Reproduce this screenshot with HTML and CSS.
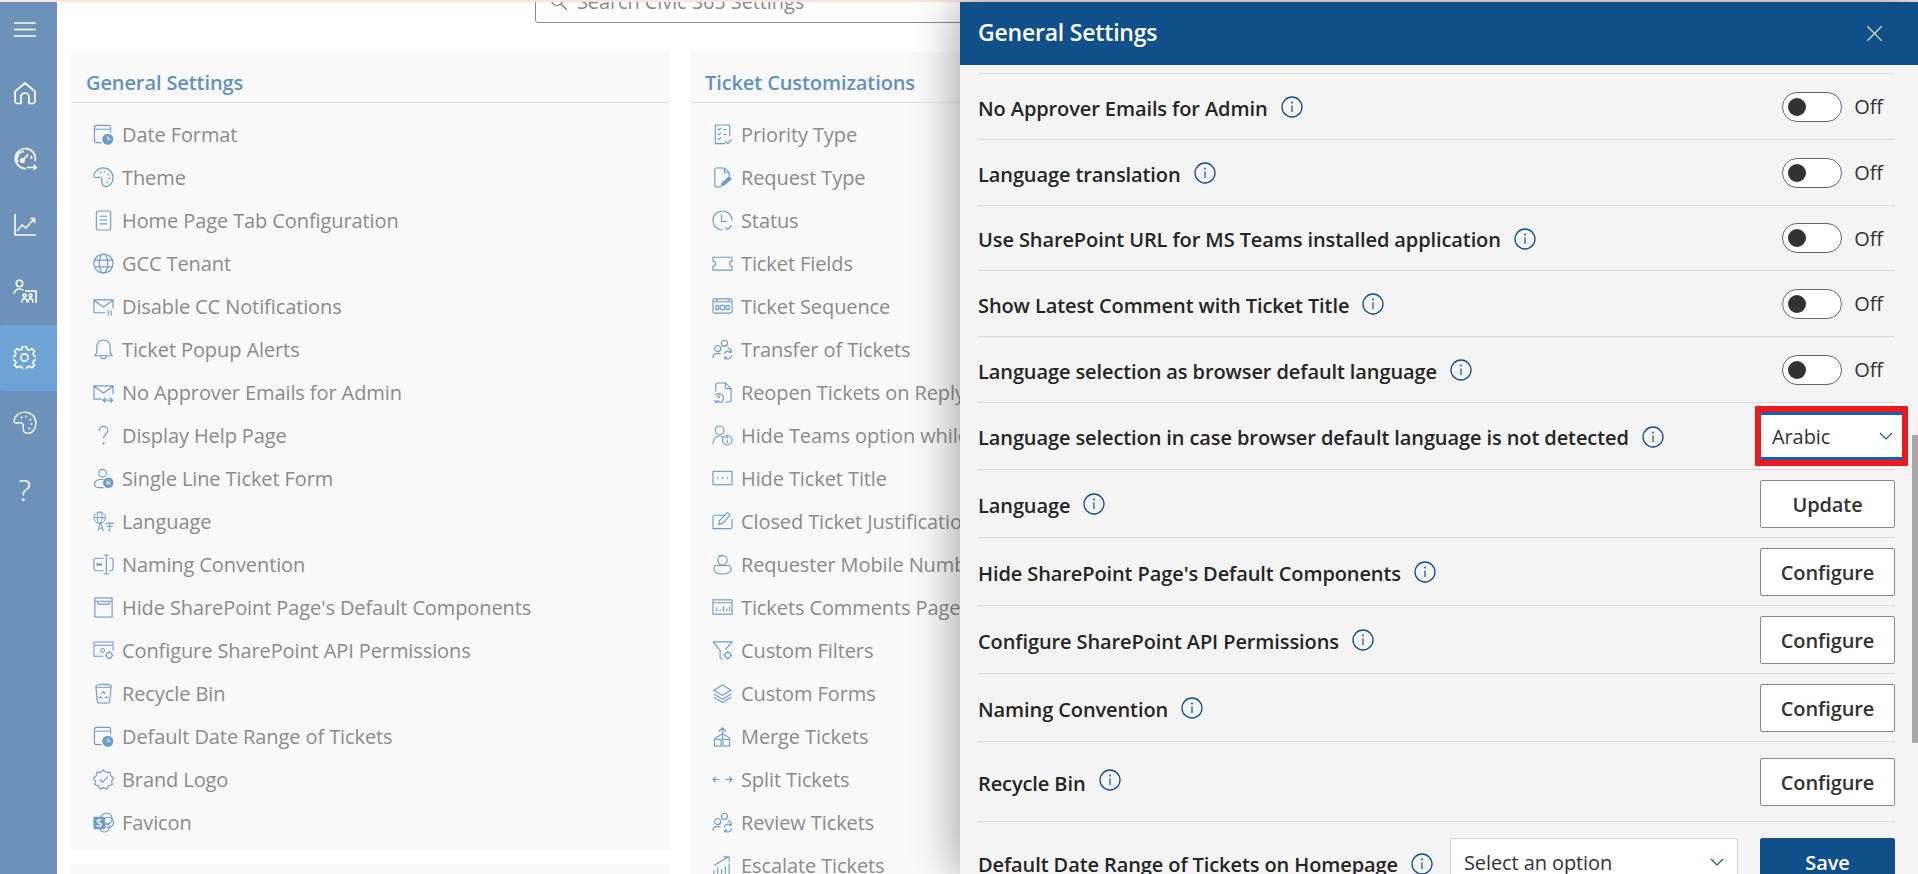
FILE: index.html
```html
<!DOCTYPE html>
<html lang="en">
<head>
  <meta charset="UTF-8">
  <title>Civic 365 Settings</title>
  <link rel="stylesheet" href="styles.css">
</head>
<body>
  <svg class="icon-defs" width="0" height="0">
    <symbol id="i-info" viewBox="0 0 22 22">
      <circle cx="11" cy="11" r="10" fill="none" stroke="currentColor" stroke-width="1.3"/>
      <path d="M11 9.500v6.500" fill="none" stroke="currentColor" stroke-width="1.2"/>
      <circle cx="11" cy="6.500" r=".9" fill="currentColor"/>
    </symbol>
    <symbol id="i-chevron" viewBox="0 0 14 8">
      <path d="M1 1l6 6 6-6" fill="none" stroke="currentColor" stroke-width="1.1"/>
    </symbol>
    <symbol id="i-calclock" viewBox="0 0 22 22">
      <path d="M9 19.500H3.500A2 2 0 0 1 1.500 17.500V3.500a2 2 0 0 1 2-2h13a2 2 0 0 1 2 2V9M1.500 5.500h17" fill="none" stroke="currentColor" stroke-width="1.2"/>
      <circle cx="15.500" cy="16" r="5.800" fill="currentColor"/>
      <path d="M15.500 12.800V16h3" fill="none" stroke="#f9f9f9" stroke-width="1.2"/>
    </symbol>
    <symbol id="i-palette" viewBox="0 0 22 22">
      <path d="M11 1C5.500 1 1.500 4.500 1 9c-.2 1.600 1.500 2.500 3 2 2-.7 4-.5 5 1 .9 1.500 0 3 .5 5 .4 2 2 3.500 4 3.500 4.500 0 7.500-4.500 7.500-9.500C21 5.500 16.500 1 11 1z" fill="none" stroke="currentColor" stroke-width="1.3"/>
      <circle cx="8" cy="6" r=".9" fill="currentColor"/><circle cx="12" cy="5" r=".9" fill="currentColor"/><circle cx="16" cy="8" r=".9" fill="currentColor"/><circle cx="17" cy="12" r=".9" fill="currentColor"/><circle cx="15" cy="16" r=".9" fill="currentColor"/>
    </symbol>
    <symbol id="i-gear" viewBox="0 0 24 24">
      <path d="M10 1.500h4l.7 3 2.300 1 2.600-1.700 2.800 2.800-1.600 2.600 1 2.300 2.700.7v3.600l-2.700.7-1 2.300 1.600 2.600-2.800 2.800-2.600-1.700-2.300 1-.7 2.500h-4l-.7-2.500-2.300-1-2.600 1.700-2.800-2.800 1.600-2.600-1-2.300-2.700-.7v-3.600l2.700-.7 1-2.300-1.600-2.600 2.800-2.800L7 5.500l2.300-1z" transform="translate(0 -1) scale(1 .98)" fill="none" stroke="currentColor" stroke-width="1.7"/>
      <circle cx="12" cy="12" r="3.800" fill="none" stroke="currentColor" stroke-width="1.7"/>
    </symbol>
    <symbol id="i-refresh-people" viewBox="0 0 22 22">
      <circle cx="13" cy="4.500" r="3.200" fill="none" stroke="currentColor" stroke-width="1.2"/>
      <circle cx="6" cy="10" r="3.200" fill="none" stroke="currentColor" stroke-width="1.2"/>
      <path d="M1 20c0-3 2-5 5-5 1.200 0 2 .3 3 1M16.500 9c2 .7 3.500 1.500 4 3.500M13 16a4 4 0 0 1 7-2M20.500 17a4 4 0 0 1-7 2.500M20 11.500V14h-2.500M13.500 21.500V19h2.500" fill="none" stroke="currentColor" stroke-width="1.2"/>
    </symbol>
  </svg>

  <div class="top-strip"></div>

  <div class="app">
    <nav class="sidebar">
      <a class="side-btn side-menu">
        <svg width="22" height="15" viewBox="0 0 22 15"><path d="M0 1h22M0 7.500h22M0 14h22" stroke="#fff" stroke-width="1.3"/></svg>
      </a>
      <a class="side-btn">
        <svg width="22" height="24" viewBox="0 0 22 24"><path d="M1 10.500 11 2l10 8.500V20a2.500 2.500 0 0 1-2.500 2.500H15V16a4 4 0 0 0-8 0v6.500H3.500A2.500 2.500 0 0 1 1 20z" fill="none" stroke="#fff" stroke-width="1.7" stroke-linejoin="round"/></svg>
      </a>
      <a class="side-btn">
        <svg width="24" height="24" viewBox="0 0 24 24" fill="none" stroke="#fff" stroke-width="1.7"><path d="M13 21.500a10 10 0 1 1 9-7.500"/><path d="M11 4.500a7 7 0 0 0-6 10.500M18 9a7 7 0 0 1 .6 3"/><path d="M8.500 14.500 15 7.500"/><circle cx="9.500" cy="13.500" r="1.700"/><path d="M14 20.500h9M20.500 18l2.700 2.500-2.700 2.500"/></svg>
      </a>
      <a class="side-btn">
        <svg width="22" height="22" viewBox="0 0 22 22" fill="none" stroke="#fff" stroke-width="1.6"><path d="M1 0v21h21"/><path d="M3 17l5-6 4 3 8-9M16 4.500h4.500V9"/></svg>
      </a>
      <a class="side-btn">
        <svg width="24" height="24" viewBox="0 0 24 24" fill="none" stroke="#fff" stroke-width="1.6"><circle cx="6.500" cy="4.500" r="3.200"/><path d="M1 15c.5-3 2.500-5 5.500-5 1.500 0 3 .5 4 1.500"/><path d="M12 12h11v12"/><path d="M9 23.500c0-3 1-4 2.500-4s2.500 1 2.500 4M15 23.500c0-3 1-4 2.500-4s2.500 1 2.500 4"/><circle cx="11.500" cy="16.500" r="1.500"/><circle cx="17.500" cy="16.500" r="1.500"/></svg>
      </a>
      <a class="side-btn active">
        <svg width="23" height="23" viewBox="0 0 24 24"><use href="#i-gear"/></svg>
      </a>
      <a class="side-btn">
        <svg width="24" height="24" viewBox="0 0 22 22"><use href="#i-palette"/></svg>
      </a>
      <a class="side-btn side-help">?</a>
    </nav>

    <main class="content">
      <div class="search-box">
        <svg width="18" height="18" viewBox="0 0 18 18" fill="none" stroke="#777" stroke-width="1.2"><circle cx="7" cy="7" r="5.500"/><path d="M11 11l6 6"/></svg>
        <span>Search Civic 365 Settings</span>
      </div>

      <div class="card-grid">
        <div class="card-col">
          <section class="card">
            <h2 class="card-title">General Settings</h2>
            <ul class="card-list">
              <li><svg class="item-icon" viewBox="0 0 22 22"><use href="#i-calclock"/></svg>Date Format</li>
              <li><svg class="item-icon" viewBox="0 0 22 22"><use href="#i-palette"/></svg>Theme</li>
              <li><svg class="item-icon" viewBox="0 0 22 22" fill="none" stroke="currentColor" stroke-width="1.2"><rect x="3.500" y="1" width="15" height="20" rx="2"/><path d="M7 6.500h8M7 10.500h8M7 14.500h8"/></svg>Home Page Tab Configuration</li>
              <li><svg class="item-icon" viewBox="0 0 22 22" fill="none" stroke="currentColor" stroke-width="1.2"><circle cx="11" cy="11" r="10"/><ellipse cx="11" cy="11" rx="4.500" ry="10"/><path d="M1.500 7.500h19M1.500 14.500h19"/></svg>GCC Tenant</li>
              <li><svg class="item-icon" viewBox="0 0 22 22" fill="none" stroke="currentColor" stroke-width="1.2"><path d="M13 17.500H1V4h20v9M1 4.500l10 7 10-7M16 15v5.500M19 15v5.500"/></svg>Disable CC Notifications</li>
              <li><svg class="item-icon" viewBox="0 0 22 22" fill="none" stroke="currentColor" stroke-width="1.2"><path d="M2 17.500c1.500-1.500 2-3 2-5V8a7 7 0 0 1 14 0v4.500c0 2 .5 3.500 2 5zM8 18c0 3.500 6 3.500 6 0"/></svg>Ticket Popup Alerts</li>
              <li><svg class="item-icon" viewBox="0 0 22 22" fill="none" stroke="currentColor" stroke-width="1.2"><path d="M9 18H1V4h20v9M1 4.500l10 7 10-7M11 19h9M13 16.500 10.500 19l2.500 2.500M18 16.500l2.500 2.500-2.500 2.500"/></svg>No Approver Emails for Admin</li>
              <li><svg class="item-icon" viewBox="0 0 22 22" fill="none" stroke="currentColor" stroke-width="1.2"><path d="M6.500 6a4.500 4.500 0 0 1 9 0c0 3-4.500 4-4.500 8"/><circle cx="11" cy="19.500" r=".6" fill="currentColor"/></svg>Display Help Page</li>
              <li><svg class="item-icon" viewBox="0 0 22 22" fill="none" stroke="currentColor" stroke-width="1.2"><circle cx="10" cy="5.500" r="4"/><path d="M11 20.500H6c-6 0-6-7.500 1-8.500h4"/><circle cx="16" cy="15.500" r="5.500" fill="currentColor" stroke="none"/><path d="M14 13.500l4 4M18 13.500l-4 4" stroke="#f9f9f9"/></svg>Single Line Ticket Form</li>
              <li><svg class="item-icon" viewBox="0 0 22 22" fill="none" stroke="currentColor" stroke-width="1"><circle cx="7" cy="7" r="6"/><ellipse cx="7" cy="7" rx="2.500" ry="6"/><path d="M1 7h12M5 21l3-9 3 9M6 18h4M13 13h9M17.500 11v10l-2-1M14 16h7"/></svg>Language</li>
              <li><svg class="item-icon" viewBox="0 0 22 22" fill="none" stroke="currentColor" stroke-width="1.2"><path d="M11 4.500H3a2 2 0 0 0-2 2v9a2 2 0 0 0 2 2h8M17 4.500h3a1 1 0 0 1 1 1v10a2 2 0 0 1-2 2h-2M11 1h6M11 21h6M14 1v20"/><path d="M3.500 11h6" stroke-width="2.5"/></svg>Naming Convention</li>
              <li><svg class="item-icon" viewBox="0 0 22 22" fill="none" stroke="currentColor" stroke-width="1.2"><rect x="2" y="1" width="18" height="20"/><path d="M2 4.500h18M5 4.500v3h12v-3"/></svg>Hide SharePoint Page's Default Components</li>
              <li><svg class="item-icon" viewBox="0 0 22 22" fill="none" stroke="currentColor" stroke-width="1.1"><path d="M11 17H1V2h20v9M1 5.500h20"/><circle cx="10" cy="11" r="2"/><circle cx="17" cy="16" r="3"/><path d="M17 11.500v1.500M17 19v1.500M12.500 16H14M20 16h1.500"/></svg>Configure SharePoint API Permissions</li>
              <li><svg class="item-icon" viewBox="0 0 22 22" fill="none" stroke="currentColor" stroke-width="1.2"><path d="M3 3.500c0-3 16-3 16 0l-1.500 15.500a2 2 0 0 1-2 2h-9a2 2 0 0 1-2-2zM3 4.500h16"/><path d="M9 11.500l2-2.500 2 2.500M8 14l-1 1.500h3M14 14l1 1.500h-3"/></svg>Recycle Bin</li>
              <li><svg class="item-icon" viewBox="0 0 22 22"><use href="#i-calclock"/></svg>Default Date Range of Tickets</li>
              <li><svg class="item-icon" viewBox="0 0 22 22" fill="none" stroke="currentColor" stroke-width="1.2"><path d="M11 1l3 2.500 3.800-.3.700 3.800 3 2.500-2 3.300.6 3.700-3.700 1.100-2 3.300L11 19.500l-3.400 1.400-2-3.300-3.700-1.100.6-3.700-2-3.300 3-2.500.7-3.800 3.800.3z"/><path d="M7 11l3 3 5.500-6"/></svg>Brand Logo</li>
              <li><svg class="item-icon" viewBox="0 0 22 22"><circle cx="14" cy="7" r="6" fill="none" stroke="currentColor" stroke-width="1.2"/><circle cx="16" cy="11" r="5.500" fill="none" stroke="currentColor" stroke-width="1.2"/><circle cx="12" cy="16" r="5" fill="none" stroke="currentColor" stroke-width="1.2"/><rect x="0.500" y="5" width="12" height="13" rx="1" fill="currentColor"/><text x="6.500" y="15.500" class="icon-letter">S</text></svg>Favicon</li>
            </ul>
          </section>
          <section class="card card-next"></section>
        </div>

        <div class="card-col">
          <section class="card card-clipped">
            <h2 class="card-title">Ticket Customizations</h2>
            <ul class="card-list">
              <li><svg class="item-icon" viewBox="0 0 22 22" fill="none" stroke="currentColor" stroke-width="1.2"><path d="M14 20.500H3.500V1h15v12"/><path d="M6 5l1.200 1.200L9.500 4M6 10l1.200 1.200L9.500 9M6 15l1.200 1.200L9.500 14M11.500 6h4M11.500 11h4M14 18l2.500 2.500 4-4.500"/></svg>Priority Type</li>
              <li><svg class="item-icon" viewBox="0 0 22 22" fill="none" stroke="currentColor" stroke-width="1.2"><path d="M10 21H5a2 2 0 0 1-2-2V2.500a1.500 1.500 0 0 1 1.500-1.500H13l5 5v4M13 1v5h5"/><path d="M9 20.500l1-4 8-7 3 3-8 7z" fill="currentColor" stroke="none"/></svg>Request Type</li>
              <li><svg class="item-icon" viewBox="0 0 22 22" fill="none" stroke="currentColor" stroke-width="1.2"><path d="M11 21a10 10 0 1 1 10-10"/><path d="M10 5v7h6M14 18l2.500 2.500 4-4.500"/></svg>Status</li>
              <li><svg class="item-icon" viewBox="0 0 22 22" fill="none" stroke="currentColor" stroke-width="1.2"><path d="M1 4.500h20v4c-3.500 0-3.500 5 0 5.500v4H1v-4c3.500-.5 3.500-5.500 0-5.500z"/></svg>Ticket Fields</li>
              <li><svg class="item-icon" viewBox="0 0 22 22" fill="none" stroke="currentColor" stroke-width="1.2"><rect x="1" y="3" width="20" height="15" rx="2"/><path d="M1 6h20M5 3v3M17 3v3"/><circle cx="11" cy="12" r="2.500"/><rect x="4" y="10" width="3" height="4"/><rect x="15" y="10" width="3" height="4"/></svg>Ticket Sequence</li>
              <li><svg class="item-icon" viewBox="0 0 22 22"><use href="#i-refresh-people"/></svg>Transfer of Tickets</li>
              <li><svg class="item-icon" viewBox="0 0 22 22" fill="none" stroke="currentColor" stroke-width="1.2"><path d="M4 10V3a2 2 0 0 1 2-2h8l6 6v12a2 2 0 0 1-2 2h-4M14 1v6h6"/><path d="M3 14a5 5 0 1 1 0 6h5"/><path d="M8 13l-2 2 2 2"/></svg>Reopen Tickets on Reply</li>
              <li><svg class="item-icon" viewBox="0 0 22 22" fill="none" stroke="currentColor" stroke-width="1.2"><circle cx="8" cy="5.500" r="4.500"/><path d="M0.700 20c.5-5 3.500-8.500 7.300-8.500 1.500 0 3 .5 4 1.500"/><circle cx="16" cy="16" r="5"/><path d="M16 15.500v3.500"/><circle cx="16" cy="13" r=".5" fill="currentColor"/></svg>Hide Teams option while creating ticket</li>
              <li><svg class="item-icon" viewBox="0 0 22 22" fill="none" stroke="currentColor" stroke-width="1.2"><rect x="1" y="3.500" width="20" height="14"/><path d="M5.500 10.500h1M10.500 10.500h1M15.500 10.500h1" stroke-width="2"/></svg>Hide Ticket Title</li>
              <li><svg class="item-icon" viewBox="0 0 22 22" fill="none" stroke="currentColor" stroke-width="1.2"><path d="M14 4.500H3a2 2 0 0 0-2 2v12h18a2 2 0 0 0 2-2V8"/><path d="M7 14l1-4 8-8.500 3 2.500-8 9z"/></svg>Closed Ticket Justification</li>
              <li><svg class="item-icon" viewBox="0 0 22 22" fill="none" stroke="currentColor" stroke-width="1.2"><circle cx="11" cy="6.500" r="5"/><path d="M7 2h4M4 12h13c2 0 3 1.500 3 3.500 0 3-3 5.500-9 5.500s-9-2.500-9-5.500c0-2 1-3.500 2-3.500z"/></svg>Requester Mobile Number</li>
              <li><svg class="item-icon" viewBox="0 0 22 22" fill="none" stroke="currentColor" stroke-width="1.2"><rect x="1" y="3" width="20" height="15"/><path d="M1 6h20M5 15v-4M8.500 15v-2M12 15v-5M15.500 15v-3M18.500 15v-5"/></svg>Tickets Comments Page Settings</li>
              <li><svg class="item-icon" viewBox="0 0 22 22" fill="none" stroke="currentColor" stroke-width="1.2"><path d="M1 2h20l-7 8M1 2l7.500 9v8l2.500 1.500"/><circle cx="16.500" cy="16" r="3"/><path d="M16.500 11.500v1.500M16.500 19v1.500M12 16h1.500M19.500 16H21"/></svg>Custom Filters</li>
              <li><svg class="item-icon" viewBox="0 0 22 22" fill="none" stroke="currentColor" stroke-width="1.2"><path d="M11 2 2 7.500l9 5.500 9-5.500zM2 11.500l9 5.500 9-5.500M2 15l9 5.500 9-5.500"/></svg>Custom Forms</li>
              <li><svg class="item-icon" viewBox="0 0 22 22" fill="none" stroke="currentColor" stroke-width="1.2"><rect x="2.500" y="14" width="7" height="7"/><rect x="11.500" y="14" width="7" height="7"/><path d="M11 14V2M7 6l4-4 4 4M3 13l8-5 8 5"/></svg>Merge Tickets</li>
              <li><svg class="item-icon" viewBox="0 0 22 22" fill="none" stroke="currentColor" stroke-width="1.2"><path d="M1 11h7M4 8l-3 3 3 3M14 11h7M18 8l3 3-3 3"/></svg>Split Tickets</li>
              <li><svg class="item-icon" viewBox="0 0 22 22"><use href="#i-refresh-people"/></svg>Review Tickets</li>
              <li><svg class="item-icon" viewBox="0 0 22 22" fill="none" stroke="currentColor" stroke-width="1.2"><path d="M2 21v-5M6 21v-8M10 21v-6M14 21v-9M18 21V9M2 11 17 2M12 2h6v5"/></svg>Escalate Tickets</li>
            </ul>
          </section>
        </div>
      </div>
    </main>
  </div>

  <!-- Panel lateral, fica por cima da lista -->
  <aside class="panel">
    <header class="panel-head">
      <h1>General Settings</h1>
      <svg width="17" height="17" viewBox="0 0 18 18"><path d="M1.500 1.500l15 15M16.500 1.500l-15 15" stroke="#fff" stroke-width="1.3"/></svg>
    </header>
    <div class="panel-body">
      <div class="row">
        <span class="row-label">No Approver Emails for Admin<svg class="info"><use href="#i-info"/></svg></span>
        <span class="switch-wrap"><span class="switch"></span>Off</span>
      </div>
      <div class="row">
        <span class="row-label">Language translation<svg class="info"><use href="#i-info"/></svg></span>
        <span class="switch-wrap"><span class="switch"></span>Off</span>
      </div>
      <div class="row row-short">
        <span class="row-label">Use SharePoint URL for MS Teams installed application<svg class="info"><use href="#i-info"/></svg></span>
        <span class="switch-wrap"><span class="switch"></span>Off</span>
      </div>
      <div class="row">
        <span class="row-label">Show Latest Comment with Ticket Title<svg class="info"><use href="#i-info"/></svg></span>
        <span class="switch-wrap"><span class="switch"></span>Off</span>
      </div>
      <div class="row">
        <span class="row-label">Language selection as browser default language<svg class="info"><use href="#i-info"/></svg></span>
        <span class="switch-wrap"><span class="switch"></span>Off</span>
      </div>
      <div class="row row-select">
        <span class="row-label">Language selection in case browser default language is not detected<svg class="info"><use href="#i-info"/></svg></span>
        <span class="select select-marked">Arabic<svg width="14" height="8"><use href="#i-chevron"/></svg></span>
      </div>
      <div class="row row-btn">
        <span class="row-label">Language<svg class="info"><use href="#i-info"/></svg></span>
        <button class="btn">Update</button>
      </div>
      <div class="row row-btn">
        <span class="row-label">Hide SharePoint Page's Default Components<svg class="info"><use href="#i-info"/></svg></span>
        <button class="btn">Configure</button>
      </div>
      <div class="row row-btn">
        <span class="row-label">Configure SharePoint API Permissions<svg class="info"><use href="#i-info"/></svg></span>
        <button class="btn">Configure</button>
      </div>
      <div class="row row-btn">
        <span class="row-label">Naming Convention<svg class="info"><use href="#i-info"/></svg></span>
        <button class="btn">Configure</button>
      </div>
      <div class="row row-tall">
        <span class="row-label">Recycle Bin<svg class="info"><use href="#i-info"/></svg></span>
        <button class="btn">Configure</button>
      </div>
      <div class="row row-last">
        <span class="row-label">Default Date Range of Tickets on Homepage<svg class="info"><use href="#i-info"/></svg></span>
        <span class="row-controls">
          <span class="select select-plain">Select an option<svg width="14" height="8"><use href="#i-chevron"/></svg></span>
          <button class="btn btn-save">Save</button>
        </span>
      </div>
    </div>
    <div class="panel-scroll"></div>
  </aside>
</body>
</html>
```

FILE: styles.css
```css
/* Layout geral */
* {
  box-sizing: border-box;
}

html, body {
  height: 100%;
}

body {
  margin: 0;
  overflow: hidden;
  background-color: #fff;
  font-family: "Open Sans", "Noto Sans", sans-serif;
  font-size: 20px;
  letter-spacing: -0.1px;
}

.icon-defs {
  position: absolute;
}

.top-strip {
  height: 2px;
  background-color: #fbe3df;
}

.app {
  display: flex;
  height: 872px;
  overflow: hidden;
}

/* Barra lateral */
.sidebar {
  flex: 0 0 57px;
  display: flex;
  flex-direction: column;
  background-color: #6c92ba;
  color: #fff;
}

.side-btn {
  height: 66px;
  display: flex;
  align-items: center;
  justify-content: center;
  padding: 0 8px 2px 0;
}

.side-menu {
  height: 59px;
  padding-bottom: 5px;
}

.side-btn.active {
  background-color: #6ea3d5;
  border-radius: 2px 0 0 2px;
}

.side-help {
  font-size: 30px;
  font-weight: 300;
}

/* Conteudo */
.content {
  flex: 1;
  min-width: 0;
  padding: 0 14px;
}

.search-box {
  display: flex;
  align-items: center;
  gap: 9px;
  width: 600px;
  height: 44px;
  margin: -23px 0 29px 464px;
  padding: 1px 0 0 14px;
  background-color: #fff;
  border: 1px solid #8a8a8a;
  border-radius: 3px;
  color: #8a8a8a;
}

.card-grid {
  display: grid;
  grid-template-columns: repeat(2, 599px);
  gap: 20px;
}

.card-col {
  display: flex;
  flex-direction: column;
  gap: 14px;
}

.card {
  height: 798px;
  background-color: #f9f9f9;
}

.card-clipped {
  width: 270px;
  height: 860px;
  overflow: hidden;
}

.card-next {
  flex: none;
  height: 60px;
}

.card-title {
  height: 51px;
  margin: 0;
  padding: 17px 15px 0;
  border-bottom: 1px solid #e2e2e2;
  color: #6192bf;
  font-size: 20px;
  font-weight: 600;
  white-space: nowrap;
}

.card-list {
  margin: 0;
  padding: 10px 0 0 22px;
  list-style: none;
}

.card-list li {
  display: flex;
  align-items: center;
  gap: 8px;
  height: 43px;
  color: #8b8b8b;
  white-space: nowrap;
}

.item-icon {
  flex: 0 0 21px;
  width: 21px;
  height: 21px;
  color: #6d9cc9;
}

.icon-letter {
  fill: #f9f9f9;
  font-size: 11px;
  font-weight: 700;
  text-anchor: middle;
}

/* Painel lateral */
.panel {
  position: absolute;
  top: 2px;
  right: 0;
  bottom: 0;
  width: 958px;
  overflow: hidden;
  background-color: #f4f4f4;
  box-shadow: -6px 0 40px rgba(0, 0, 0, 0.32);
}

.panel-head {
  display: flex;
  align-items: center;
  justify-content: space-between;
  height: 63px;
  padding: 0 35px 0 18px;
  background-color: #0f4f8a;
  color: #fff;
}

.panel-head h1 {
  margin: 0 0 3px;
  font-size: 23px;
  font-weight: 600;
  letter-spacing: -0.2px;
}

.panel-body {
  margin: 8px 23px 0 18px;
  border-top: 1px solid #dcdcdc;
}

.row {
  display: flex;
  align-items: center;
  justify-content: space-between;
  height: 66px;
  border-bottom: 1px solid #d9d5d6;
}

.row-short {
  height: 65px;
}

.row-select {
  height: 67px;
}

.row-btn {
  height: 68px;
}

.row-tall {
  height: 80px;
}

.row-tall .row-label {
  padding-top: 4px;
}

.row-tall .info {
  margin-top: -7px;
}

.row-last {
  height: 80px;
  align-items: flex-start;
  border-bottom: 0;
}

.row-last .row-label {
  height: 48px;
  margin-top: 17px;
}

.row-label {
  display: flex;
  align-items: center;
  padding-top: 3px;
  color: #252525;
  font-weight: 600;
}

.info {
  width: 22px;
  height: 22px;
  margin: -2px 0 0 13px;
  color: #0f4f8a;
}

.switch-wrap {
  display: flex;
  align-items: center;
  gap: 12px;
  margin-right: 12px;
  color: #323232;
}

.switch {
  display: block;
  position: relative;
  width: 60px;
  height: 30px;
  background-color: #fff;
  border: 1px solid #666;
  border-radius: 15px;
}

/* bolinha do toggle */
.switch::before {
  content: "";
  position: absolute;
  top: 5px;
  left: 5px;
  width: 18px;
  height: 18px;
  border-radius: 50%;
  background-color: #323232;
}

.select {
  display: flex;
  align-items: center;
  justify-content: space-between;
  height: 48px;
  padding: 0 9px 0 11px;
  background-color: #fff;
  color: #323232;
}

.select svg {
  color: #0f4f8a;
}

.select-marked {
  width: 141px;
  margin-right: -7px;
  border-top: 3px solid #1560aa;
  border-bottom: 3px solid #1560aa;
  outline: 6px solid #e8191f;
}

.select-plain {
  width: 288px;
  padding: 0 13px;
  border: 1px solid #d2d2d2;
  border-radius: 2px;
}

.row-controls {
  display: flex;
  align-items: center;
  gap: 22px;
  margin-top: 16px;
}

.btn {
  width: 135px;
  height: 48px;
  padding: 1px 0 0;
  background-color: #fff;
  border: 1px solid #8a8a8a;
  border-radius: 2px;
  color: #323232;
  font: inherit;
  font-weight: 600;
  letter-spacing: inherit;
}

.btn-save {
  background-color: #0f4f8a;
  border-color: #0f4f8a;
  color: #fff;
}

.panel-scroll {
  position: absolute;
  top: 433px;
  right: 0;
  width: 6px;
  height: 308px;
  background-color: #a8a8a8;
}
```
